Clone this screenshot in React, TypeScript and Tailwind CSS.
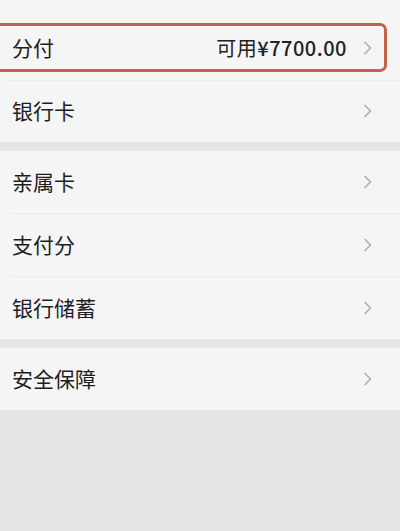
const font = { fontFamily: '"Noto Sans CJK SC", "Noto Sans", sans-serif' };

function Chevron() {
  return (
    <svg width="10" height="14" viewBox="0 0 10 14" className="shrink-0">
      <path d="M2 1.5 L7.5 7 L2 12.5" fill="none" stroke="#b0b0b0" strokeWidth="1.7" strokeLinecap="round" strokeLinejoin="round" />
    </svg>
  );
}

function Row({ label, height, divider }: { label: string; height: string; divider?: boolean }) {
  return (
    <div className={`relative flex items-center pl-3 pr-[27px] ${height}`}>
      {divider && <div className="absolute top-0 left-[9px] right-0 h-px bg-[#ebebeb]" />}
      <span className="flex-1 text-[21px] text-[#1e1e1e]">{label}</span>
      <Chevron />
    </div>
  );
}

export default function App() {
  return (
    <div className="w-[400px] h-[531px] bg-[#e5e5e5] overflow-hidden" style={font}>
      {/* 分付 + 银行卡 */}
      <div className="bg-[#f5f5f5]">
        <div className="pt-[23px] pb-[8px]">
          <div className="ml-[-6px] mr-[13px] h-[49px] border-[3px] border-[#bf6248] rounded-[7px] flex items-center pl-[15px] pr-[11px]">
            <span className="flex-1 text-[21px] text-[#1e1e1e]">分付</span>
            <span className="text-[20px] tracking-[0.5px] text-[#222] mr-[16px]">
              可用<span className="font-medium">¥7700.00</span>
            </span>
            <Chevron />
          </div>
        </div>
        <Row label="银行卡" height="h-[62px]" divider />
      </div>

      <div className="h-[9px]" />

      {/* 亲属卡 / 支付分 / 银行储蓄 */}
      <div className="bg-[#f5f5f5]">
        <Row label="亲属卡" height="h-[62px]" />
        <Row label="支付分" height="h-[63px]" divider />
        <Row label="银行储蓄" height="h-[63px]" divider />
      </div>

      <div className="h-[9px]" />

      {/* 安全保障 */}
      <div className="bg-[#f5f5f5]">
        <Row label="安全保障" height="h-[62px]" />
      </div>
    </div>
  );
}
